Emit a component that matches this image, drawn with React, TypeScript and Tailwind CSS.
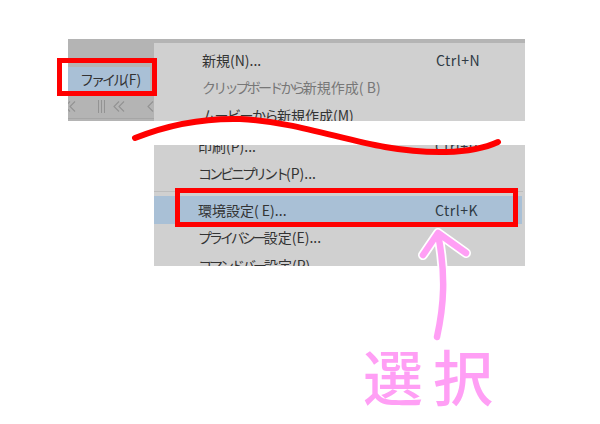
const font = { fontFamily: '"Noto Sans CJK JP", "Noto Sans", sans-serif' };

function MenuRow({
  kana,
  label,
  shortcut,
  muted,
  active,
  inset,
  track,
}: {
  kana?: string;
  label: string;
  shortcut?: string;
  muted?: boolean;
  active?: boolean;
  inset?: boolean;
  track?: string;
}) {
  return (
    <div
      className={`flex h-[27.5px] items-center text-[14px] leading-none ${muted ? "text-[#777777]" : "text-[#333333]"} ${active ? "bg-[#a9c0d6] mr-[3px]" : ""}`}
    >
      <span className={`whitespace-nowrap ${inset ? "w-[281px] pl-[44px]" : "w-[282px] pl-[48px]"}`}>
        {kana && <span className={track}>{kana}</span>}
        {label}
      </span>
      {shortcut && <span className="tracking-[0.5px] text-[#2f3a44]">{shortcut}</span>}
    </div>
  );
}

function Chevron({ double }: { double?: boolean }) {
  return (
    <svg width={double ? 12 : 7} height="11" viewBox={double ? "0 0 12 11" : "0 0 7 11"} fill="none" stroke="#939393" strokeWidth="1.1">
      <path d="M6 .5 1 5.5l5 5" />
      {double && <path d="M11 .5 6 5.5l5 5" />}
    </svg>
  );
}

export default function App() {
  return (
    <div className="relative h-[424px] w-[600px] overflow-hidden bg-white pt-[39px] pl-[68px]" style={font}>
      {/* top crop */}
      <div className="flex h-[82px] w-[457px] bg-[#b4b4b4]">
        <div className="flex w-[86px] flex-col overflow-hidden">
          <div className="mt-[28px] flex h-[25px] w-[82px] items-center bg-[#a9c0d6] pl-[12px] text-[14px] text-[#333333]">
            <span className="tracking-[-3px]">ファイル</span>
            <span>(F)</span>
          </div>
          <div className="mt-[8px] -ml-[4px] flex items-center">
            <Chevron double />
            <div className="ml-[22px] flex gap-[2px]">
              <div className="h-[13px] w-px bg-[#939393]" />
              <div className="h-[13px] w-px bg-[#939393]" />
              <div className="h-[13px] w-px bg-[#939393]" />
            </div>
            <div className="ml-[8px]"><Chevron double /></div>
            <div className="ml-[22px]"><Chevron /></div>
          </div>
          <div className="mt-[5px] h-px bg-[#a6a6a6]" />
        </div>
        <div className="mt-[4px] flex-1 overflow-hidden bg-[#d0d0d0] pt-[3px]">
          <MenuRow label="新規(N)..." shortcut="Ctrl+N" />
          <MenuRow kana="クリップボードから" label="新規作成( B)" muted track="tracking-[-2.8px]" />
          <MenuRow kana="ムービーから" label="新規作成(M)" track="tracking-[-1.5px]" />
        </div>
      </div>

      {/* bottom crop */}
      <div className="mt-[24px] ml-[86px] h-[121px] w-[371px] overflow-hidden bg-[#d0d0d0]">
        <div className="-mt-[13px]">
          <MenuRow label="印刷(P)..." shortcut="Ctrl+P" inset />
          <MenuRow kana="コンビニプリント" label="(P)..." inset track="tracking-[-3px]" />
          <div className="mt-[4px] mb-[4px] mr-[2px] h-px bg-[#bdbdbd]" />
          <MenuRow kana="環境設定" label="( E)..." shortcut="Ctrl+K" active inset />
          <MenuRow kana="プライバシー" label="設定(E)..." inset track="tracking-[-3px]" />
          <MenuRow kana="コマンドバー" label="設定(P)..." inset track="tracking-[-3px]" />
        </div>
      </div>

      {/* annotations */}
      <div className="absolute top-[58px] left-[57px] h-[38px] w-[100px] border-[5px] border-[#ff0000]" />
      <div className="absolute top-[188px] left-[175px] h-[39px] w-[343px] border-[5px] border-[#ff0000]" />
      <svg className="absolute top-0 left-0" width="600" height="424" fill="none" strokeLinecap="round" strokeLinejoin="round">
        <path d="M135 138C165 126 200 118 240 119C290 121 340 139 385 147C425 154 470 155 498 142" stroke="#ff0000" strokeWidth="6" />
        <path d="M437 337C444 305 446 275 438 234M423 255 438 233 466 253" stroke="#ffffff" strokeWidth="10" />
        <path d="M437 337C444 305 446 275 438 234M423 255 438 233 466 253" stroke="#ff9ff5" strokeWidth="6.5" />
      </svg>
      <div className="absolute top-[345px] left-[363px] text-[60px] leading-none font-medium tracking-[10px] whitespace-nowrap text-[#ff9ff5]">選択</div>
    </div>
  );
}
